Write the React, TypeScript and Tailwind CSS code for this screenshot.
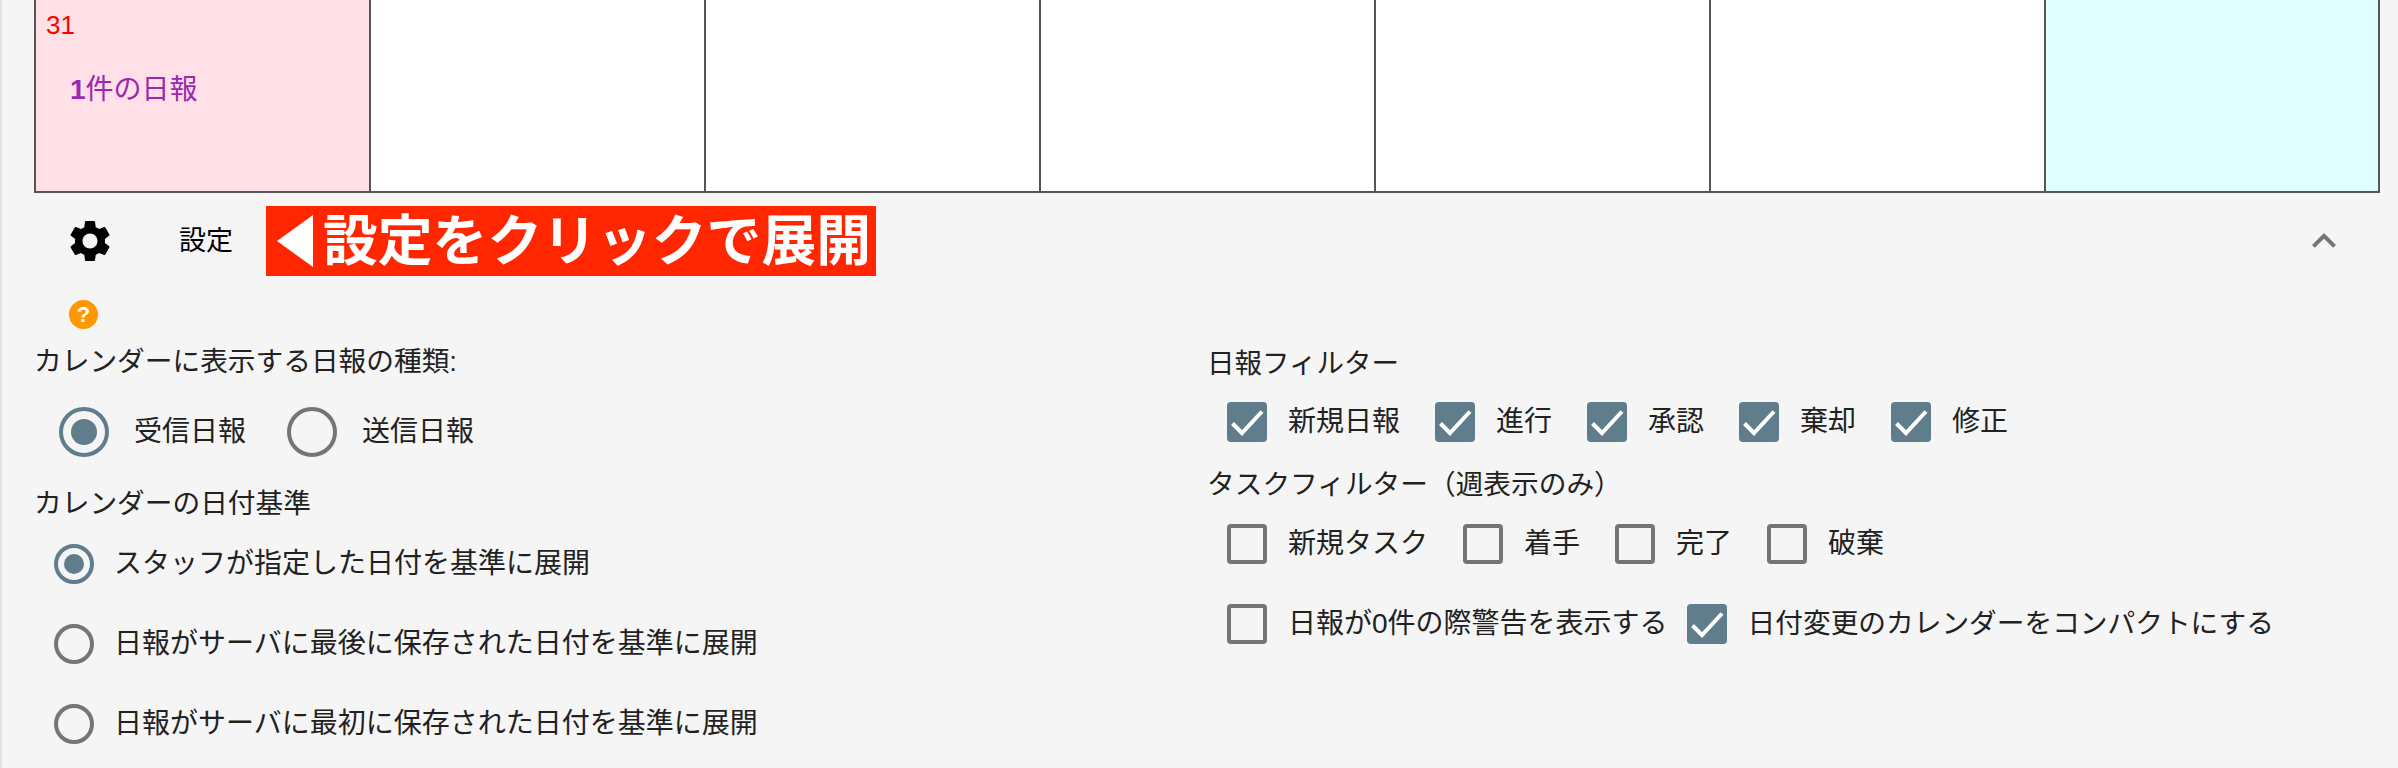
const DAYS = [
  { bg: "bg-[#ffe0e6]", date: "31", note: "件の日報" },
  { bg: "bg-white" },
  { bg: "bg-white" },
  { bg: "bg-white" },
  { bg: "bg-white" },
  { bg: "bg-white" },
  { bg: "bg-[#e0ffff]" },
];

const REPORT_FILTERS = [
  { label: "新規日報", gap: "mr-[35px]" },
  { label: "進行", gap: "mr-[35px]" },
  { label: "承認", gap: "mr-[35px]" },
  { label: "棄却", gap: "mr-[35px]" },
  { label: "修正", gap: "" },
];

const TASK_FILTERS = ["新規タスク", "着手", "完了", "破棄"];

const BASE_OPTIONS = [
  "スタッフが指定した日付を基準に展開",
  "日報がサーバに最後に保存された日付を基準に展開",
  "日報がサーバに最初に保存された日付を基準に展開",
];

function Radio({ checked, large }: { checked?: boolean; large?: boolean }) {
  return (
    <span
      className={`flex shrink-0 items-center justify-center rounded-full ${
        large ? "h-[50px] w-[50px] border-[4px]" : "h-[40px] w-[40px] border-[4px]"
      } ${checked ? "border-[#607d8b]" : "border-[#757575]"}`}
    >
      {checked && (
        <span
          className={`rounded-full bg-[#607d8b] ${large ? "h-[26px] w-[26px]" : "h-[20px] w-[20px]"}`}
        />
      )}
    </span>
  );
}

function Checkbox({ checked }: { checked?: boolean }) {
  if (checked) {
    return (
      <span className="flex h-[40px] w-[40px] shrink-0 items-center justify-center rounded-[4px] bg-[#607d8b]">
        <svg viewBox="0 0 40 40" className="h-[40px] w-[40px]" fill="none">
          <path d="M5.5 21.5 L15 31 L35 9.5" stroke="white" strokeWidth="4" />
        </svg>
      </span>
    );
  }
  return <span className="h-[40px] w-[40px] shrink-0 rounded-[4px] border-[4px] border-[#757575]" />;
}

export default function App() {
  return (
    <div
      className="h-[768px] w-[2398px] overflow-hidden border-l-2 border-[#e0e0e0] bg-[#f5f5f5] text-[28px] text-[#212121]"
      style={{ fontFamily: '"Liberation Sans", "Noto Sans CJK JP", sans-serif' }}
    >
      <div className="ml-[32px] grid h-[193px] w-[2346px] grid-cols-[repeat(6,335px)_1fr] border-x-2 border-b-2 border-[#555555]">
        {DAYS.map((day, i) => (
          <div key={i} className={`${day.bg} ${i < 6 ? "border-r-2 border-[#555555]" : ""}`}>
            {day.date && (
              <>
                <div className="mt-[8px] ml-[10px] text-[26px] leading-[34px] text-[#ff0000]">{day.date}</div>
                <div className="mt-[28px] ml-[34px] leading-[40px] text-[#9c27b0]">
                  <span className="font-bold">1</span>
                  {day.note}
                </div>
              </>
            )}
          </div>
        ))}
      </div>

      <div className="flex h-[96px] items-center">
        <svg viewBox="0 0 24 24" className="ml-[63px] h-[50px] w-[50px] fill-black">
          <path d="M19.14 12.94c.04-.3.06-.61.06-.94 0-.32-.02-.64-.07-.94l2.03-1.58c.18-.14.23-.41.12-.61l-1.92-3.32c-.12-.22-.37-.29-.59-.22l-2.39.96c-.5-.38-1.03-.7-1.62-.94l-.36-2.54c-.04-.24-.24-.41-.48-.41h-3.84c-.24 0-.43.17-.47.41l-.36 2.54c-.59.24-1.13.57-1.62.94l-2.39-.96c-.22-.08-.47 0-.59.22L2.74 8.87c-.12.21-.08.47.12.61l2.03 1.58c-.05.3-.09.63-.09.94s.02.64.07.94l-2.03 1.58c-.18.14-.23.41-.12.61l1.92 3.32c.12.22.37.29.59.22l2.39-.96c.5.38 1.03.7 1.62.94l.36 2.54c.05.24.24.41.48.41h3.84c.24 0 .44-.17.47-.41l.36-2.54c.59-.24 1.13-.56 1.62-.94l2.39.96c.22.08.47 0 .59-.22l1.92-3.32c.12-.22.07-.47-.12-.61l-2.01-1.58zM12 15.6c-1.98 0-3.6-1.62-3.6-3.6s1.62-3.6 3.6-3.6 3.6 1.62 3.6 3.6-1.62 3.6-3.6 3.6z" />
        </svg>
        <span className="ml-[64px] w-[54px] text-[27px] text-black">設定</span>
        <div className="ml-[33px] flex h-[70px] w-[610px] items-center bg-[#ff2600] text-[54.8px] leading-none font-bold whitespace-nowrap text-white">
          <svg viewBox="0 0 36 52" className="ml-[11px] h-[52px] w-[36px] shrink-0 fill-white">
            <path d="M36 0 V52 L0 26 Z" />
          </svg>
          <span className="ml-[10px]">設定をクリックで展開</span>
        </div>
        <svg viewBox="0 0 24 24" className="mr-[50px] ml-auto h-[48px] w-[48px] fill-[#757575]">
          <path d="M12 8l-6 6 1.41 1.41L12 10.83l4.59 4.58L18 14z" />
        </svg>
      </div>

      <div className="h-[46px] pt-[11px]">
        <span className="ml-[67px] flex h-[29px] w-[29px] items-center justify-center rounded-full bg-[#ff9800] text-[22px] font-bold text-white">
          ?
        </span>
      </div>

      <div className="flex">
        <div className="ml-[32px] w-[1173px]">
          <div className="flex h-[50px] items-center pt-[3px] text-[27.7px]">カレンダーに表示する日報の種類:</div>
          <div className="mt-[22px] flex h-[50px] items-center pl-[25px]">
            <Radio checked large />
            <span className="mr-[41px] ml-[25px]">受信日報</span>
            <Radio large />
            <span className="ml-[25px]">送信日報</span>
          </div>
          <div className="mt-[23px] flex h-[44px] items-center pt-[3px] text-[27.7px]">カレンダーの日付基準</div>
          {BASE_OPTIONS.map((option, i) => (
            <div key={option} className="flex h-[80px] items-center pl-[20px]">
              <Radio checked={i === 0} />
              <span className="ml-[20px]">{option}</span>
            </div>
          ))}
        </div>

        <div className="flex-1">
          <div className="flex h-[50px] items-center pt-[7px] text-[27.5px]">日報フィルター</div>
          <div className="mt-[17px] flex h-[40px] items-center pl-[20px]">
            {REPORT_FILTERS.map((filter) => (
              <div key={filter.label} className={`flex items-center ${filter.gap}`}>
                <Checkbox checked />
                <span className="ml-[21px]">{filter.label}</span>
              </div>
            ))}
          </div>
          <div className="mt-[16px] flex h-[50px] items-center pt-[3px] text-[27.7px]">タスクフィルター（週表示のみ）</div>
          <div className="mt-[16px] flex h-[40px] items-center pl-[20px]">
            {TASK_FILTERS.map((label) => (
              <div key={label} className="mr-[35px] flex items-center">
                <Checkbox />
                <span className="ml-[21px]">{label}</span>
              </div>
            ))}
          </div>
          <div className="mt-[40px] flex h-[40px] items-center pl-[20px]">
            <Checkbox />
            <span className="mr-[19px] ml-[21px]">日報が0件の際警告を表示する</span>
            <Checkbox checked />
            <span className="ml-[21px] text-[27.7px]">日付変更のカレンダーをコンパクトにする</span>
          </div>
        </div>
      </div>
    </div>
  );
}
